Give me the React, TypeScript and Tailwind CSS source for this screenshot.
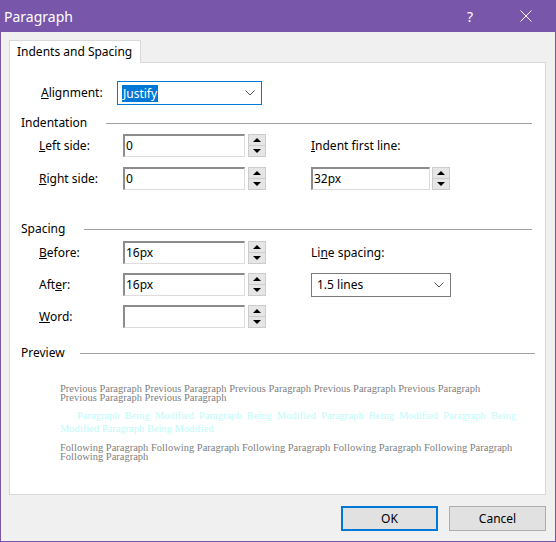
import React from 'react'

const ui = "font-['Noto_Sans',sans-serif] text-[12px] text-black"

function Spinner({ className = 'ml-[3px]' }: { className?: string }) {
  return (
    <div className={`${className} flex h-[23px] w-[18px] flex-col border border-[#cccccc] bg-[#e6e6e6]`}>
      <div className="flex flex-1 items-center justify-center border-b border-[#cccccc]">
        <div className="h-0 w-0 border-x-[4px] border-b-[4px] border-x-transparent border-b-black" />
      </div>
      <div className="flex flex-1 items-center justify-center">
        <div className="h-0 w-0 border-x-[4px] border-t-[4px] border-x-transparent border-t-black" />
      </div>
    </div>
  )
}

function Field({ value, className = 'w-[122px]' }: { value: string; className?: string }) {
  return (
    <div
      className={`${className} flex h-[23px] items-center border-t-2 border-l-2 border-r border-b border-t-[#8c8c8c] border-l-[#8c8c8c] border-r-[#dcdcdc] border-b-[#dcdcdc] bg-white pl-[1px] leading-none`}
    >
      {value}
    </div>
  )
}

function Chevron() {
  return (
    <svg width="10" height="6" viewBox="0 0 10 6" className="shrink-0">
      <polyline points="0.5,0.5 5,5 9.5,0.5" fill="none" stroke="#555" strokeWidth="1" />
    </svg>
  )
}

function SpinRow({ label, value }: { label: React.ReactNode; value: string }) {
  return (
    <div className="flex h-[23px] items-center">
      <div className="ml-[29px] w-[84px]">{label}</div>
      <Field value={value} />
      <Spinner />
    </div>
  )
}

const prev = Array(7).fill('Previous Paragraph').join(' ')
const mod = Array(5).fill('Paragraph Being Modified').join(' ')
const next = Array(6).fill('Following Paragraph').join(' ')

export default function App() {
  return (
    <div className={`${ui} flex h-[542px] w-[556px] flex-col border-x border-b border-[#7856aa] bg-[#f0f0f0]`}>
      {/* title bar */}
      <div className="flex h-[32px] shrink-0 items-center bg-[#7856aa] pl-[3px] text-white">
        <span className="text-[14px]">Paragraph</span>
        <span className="ml-auto mr-[47px] text-[14px]">?</span>
        <svg width="12" height="12" viewBox="0 0 12 12" className="mr-[23px]">
          <line x1="0.5" y1="0.5" x2="11.5" y2="11.5" stroke="white" strokeWidth="1" />
          <line x1="11.5" y1="0.5" x2="0.5" y2="11.5" stroke="white" strokeWidth="1" />
        </svg>
      </div>

      {/* tab */}
      <div className="relative z-10 -mb-px ml-[8px] mt-[8px] flex h-[23px] w-[132px] items-center border border-b-0 border-[#d9d9d9] bg-white pl-[7px]">
        Indents and Spacing
      </div>

      {/* panel */}
      <div className="ml-[8px] mr-[9px] h-[433px] border border-[#d9d9d9] bg-white">
        <div className="mt-[18px] flex items-center">
          <div className="ml-[31px] w-[76px]">
            <u>A</u>lignment:
          </div>
          <div className="flex h-[24px] w-[145px] items-center border border-[#0078d7] pl-[4px] pr-[6px]">
            <span className="bg-[#0078d7] px-[1px] leading-[17px] text-white">Justify</span>
            <div className="ml-auto">
              <Chevron />
            </div>
          </div>
        </div>

        {/* Indentation */}
        <div className="mt-[10px] flex h-[16px] items-center pl-[11px] pr-[13px]">
          <span>Indentation</span>
          <div className="ml-[19px] h-px flex-1 bg-[#a0a0a0]" />
        </div>
        <div className="mt-[3px] flex">
          <div className="flex w-[301px] flex-col gap-[10px]">
            <SpinRow label={<><u>L</u>eft side:</>} value="0" />
            <SpinRow label={<><u>R</u>ight side:</>} value="0" />
          </div>
          <div className="flex flex-col gap-[10px]">
            <div className="flex h-[23px] items-center">
              <span>
                <u>I</u>ndent first line:
              </span>
            </div>
            <div className="flex h-[23px] items-center">
              <Field value="32px" className="w-[119px]" />
              <Spinner className="ml-[2px]" />
            </div>
          </div>
        </div>

        {/* Spacing */}
        <div className="mt-[31px] flex h-[16px] items-center pl-[11px] pr-[13px]">
          <span>Spacing</span>
          <div className="ml-[19px] h-px flex-1 bg-[#a0a0a0]" />
        </div>
        <div className="mt-[4px] flex">
          <div className="flex w-[301px] flex-col gap-[9px]">
            <SpinRow label={<><u>B</u>efore:</>} value="16px" />
            <SpinRow label={<>Aft<u>e</u>r:</>} value="16px" />
            <SpinRow label={<><u>W</u>ord:</>} value="" />
          </div>
          <div className="flex flex-col gap-[9px]">
            <div className="flex h-[23px] items-center">
              <span>
                Li<u>n</u>e spacing:
              </span>
            </div>
            <div className="flex h-[24px] w-[140px] items-center border border-[#7a7a7a] pl-[5px] pr-[6px]">
              <span>1.5 lines</span>
              <div className="ml-auto">
                <Chevron />
              </div>
            </div>
          </div>
        </div>

        {/* Preview */}
        <div className="mt-[17px] flex h-[16px] items-center pl-[11px] pr-[10px]">
          <span>Preview</span>
          <div className="ml-[15px] h-px flex-1 bg-[#a0a0a0]" />
        </div>
        <div className="ml-[50px] mt-[23px] w-[456px] font-['Liberation_Serif',serif] text-[10.5px]">
          <p className="leading-[9px] text-[#808080]">{prev.split(' ').slice(0, 14).join(' ')}</p>
          <p className="mt-[7px] indent-[17px] text-justify leading-[13px] text-[#c2fafa] [text-align-last:left]">
            {mod}
          </p>
          <p className="mt-[8px] leading-[9px] text-[#808080]">{next}</p>
        </div>
      </div>

      {/* buttons */}
      <div className="mt-[11px] flex justify-end gap-[11px] pr-[9px]">
        <button className="flex h-[25px] w-[97px] items-center justify-center border-2 border-[#0078d7] bg-[#e1e1e1]">
          OK
        </button>
        <button className="flex h-[25px] w-[97px] items-center justify-center border border-[#adadad] bg-[#e1e1e1]">
          Cancel
        </button>
      </div>
    </div>
  )
}
